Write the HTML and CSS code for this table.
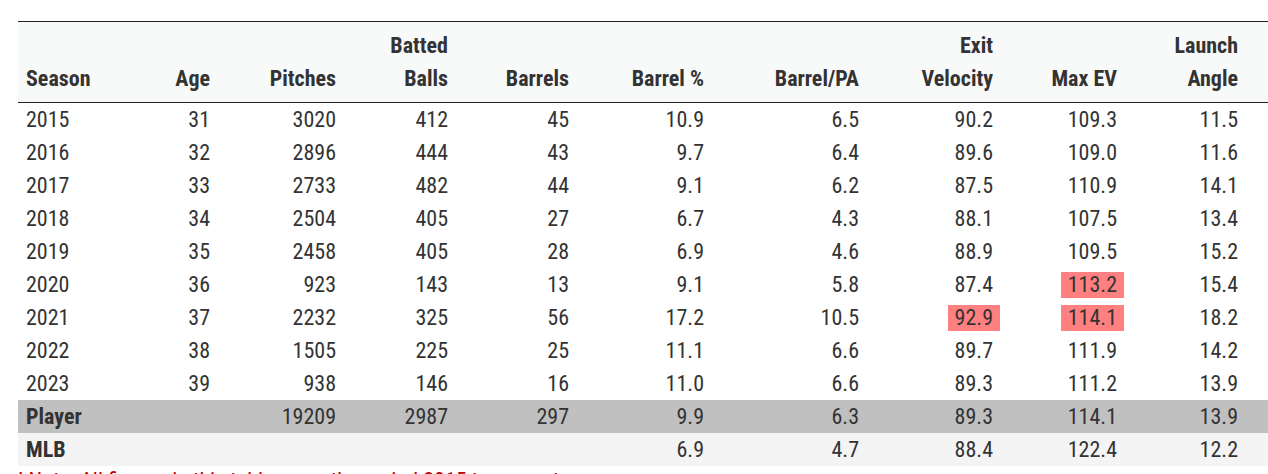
FILE: index.html
```html
<!DOCTYPE html>
<html>
<head>
<meta charset="utf-8">
<link rel="stylesheet" href="styles.css">
</head>
<body>
<div class="wrap">
<table class="stats">
  <colgroup>
    <col class="c-season"><col class="c-age"><col class="c-pitches"><col class="c-bb"><col class="c-barrels"><col class="c-bpct"><col class="c-bpa"><col class="c-ev"><col class="c-max"><col class="c-la">
  </colgroup>
  <thead>
    <tr>
      <th class="left">Season</th>
      <th>Age</th>
      <th>Pitches</th>
      <th>Batted<br>Balls</th>
      <th>Barrels</th>
      <th>Barrel %</th>
      <th>Barrel/PA</th>
      <th>Exit<br>Velocity</th>
      <th>Max EV</th>
      <th class="last">Launch<br>Angle</th>
    </tr>
  </thead>
  <tbody>
    <tr><td class="left">2015</td><td>31</td><td>3020</td><td>412</td><td>45</td><td>10.9</td><td>6.5</td><td>90.2</td><td>109.3</td><td class="last">11.5</td></tr>
    <tr><td class="left">2016</td><td>32</td><td>2896</td><td>444</td><td>43</td><td>9.7</td><td>6.4</td><td>89.6</td><td>109.0</td><td class="last">11.6</td></tr>
    <tr><td class="left">2017</td><td>33</td><td>2733</td><td>482</td><td>44</td><td>9.1</td><td>6.2</td><td>87.5</td><td>110.9</td><td class="last">14.1</td></tr>
    <tr><td class="left">2018</td><td>34</td><td>2504</td><td>405</td><td>27</td><td>6.7</td><td>4.3</td><td>88.1</td><td>107.5</td><td class="last">13.4</td></tr>
    <tr><td class="left">2019</td><td>35</td><td>2458</td><td>405</td><td>28</td><td>6.9</td><td>4.6</td><td>88.9</td><td>109.5</td><td class="last">15.2</td></tr>
    <tr><td class="left">2020</td><td>36</td><td>923</td><td>143</td><td>13</td><td>9.1</td><td>5.8</td><td>87.4</td><td><span class="hi">113.2</span></td><td class="last">15.4</td></tr>
    <tr><td class="left">2021</td><td>37</td><td>2232</td><td>325</td><td>56</td><td>17.2</td><td>10.5</td><td><span class="hi">92.9</span></td><td><span class="hi">114.1</span></td><td class="last">18.2</td></tr>
    <tr><td class="left">2022</td><td>38</td><td>1505</td><td>225</td><td>25</td><td>11.1</td><td>6.6</td><td>89.7</td><td>111.9</td><td class="last">14.2</td></tr>
    <tr><td class="left">2023</td><td>39</td><td>938</td><td>146</td><td>16</td><td>11.0</td><td>6.6</td><td>89.3</td><td>111.2</td><td class="last">13.9</td></tr>
    <tr class="player"><td class="left b">Player</td><td></td><td>19209</td><td>2987</td><td>297</td><td>9.9</td><td>6.3</td><td>89.3</td><td>114.1</td><td class="last">13.9</td></tr>
    <tr class="mlb"><td class="left b">MLB</td><td></td><td></td><td></td><td></td><td>6.9</td><td>4.7</td><td>88.4</td><td>122.4</td><td class="last">12.2</td></tr>
  </tbody>
</table>
<p class="note">! Note: All figures in this table cover the period 2015 to present</p>
</div>
</body>
</html>
```
FILE: styles.css
```css
html, body {
  margin: 0;
  padding: 0;
  background: #ffffff;
}
body {
  font-family: "Roboto Condensed", "Roboto", sans-serif;
  font-stretch: condensed;
  color: #333333;
  font-size: 22px;
}
.wrap {
  padding: 21px 0 0 18px;
}
.stats {
  width: 1250px;
  table-layout: fixed;
  border-collapse: collapse;
  border-top: 1px solid #222222;
}
.c-season { width: 110px; }
.c-age { width: 90px; }
.c-pitches { width: 126px; }
.c-bb { width: 112px; }
.c-barrels { width: 121px; }
.c-bpct { width: 135px; }
.c-bpa { width: 155px; }
.c-ev { width: 134px; }
.c-max { width: 124px; }
.c-la { width: 143px; }
thead tr {
  background: #f8f9f9;
  border-bottom: 1px solid #222222;
}
th {
  font-weight: 700;
  text-align: right;
  vertical-align: bottom;
  line-height: 33px;
  padding: 7px 8px 7px 8px;
  color: #333333;
}
td {
  text-align: right;
  line-height: 26px;
  height: 26px;
  padding: 3.5px 8px;
  white-space: nowrap;
}
th.left, td.left { text-align: left; }
th.last, td.last { padding-right: 30px; }
td.b { font-weight: 700; }
.player { background: #c0c0c0; }
.mlb { background: #f4f4f4; }
.hi {
  display: inline-block;
  background: #ff8080;
  padding: 0 7px;
  margin: 0 -7px;
}
.note {
  margin: 2px 0 0 0;
  color: #c00000;
  font-size: 22px;
  line-height: 26px;
}
```
